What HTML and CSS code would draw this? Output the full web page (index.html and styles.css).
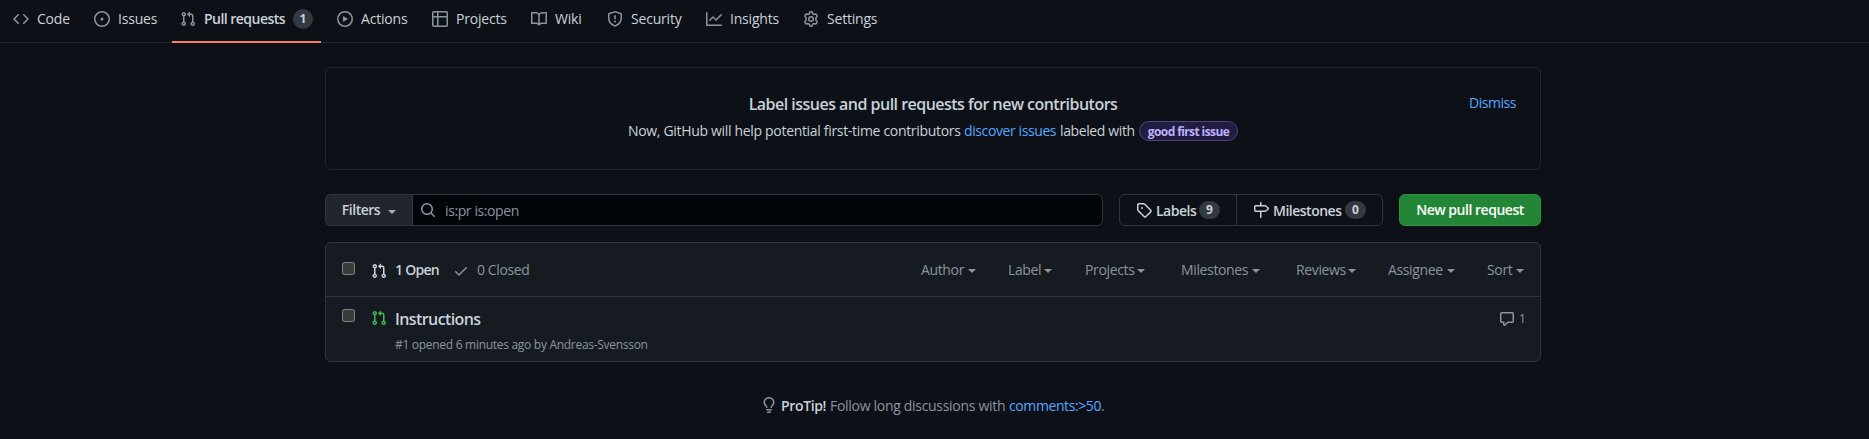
FILE: index.html
```
<!DOCTYPE html>
<html lang="en">
<head>
<meta charset="utf-8">
<title>Pull requests</title>
<link rel="stylesheet" href="styles.css">
</head>
<body>
<svg class="defs" width="0" height="0">
  <symbol id="pr" viewBox="0 0 16 16"><path fill-rule="evenodd" d="M7.177 3.073L9.573.677A.25.25 0 0110 .854v4.792a.25.25 0 01-.427.177L7.177 3.427a.25.25 0 010-.354zM3.75 2.5a.75.75 0 100 1.5.75.75 0 000-1.5zm-2.25.75a2.25 2.25 0 113 2.122v5.256a2.251 2.251 0 11-1.5 0V5.372A2.25 2.25 0 011.5 3.25zM11 2.5h-1V4h1a1 1 0 011 1v5.628a2.251 2.251 0 101.5 0V5A2.5 2.5 0 0011 2.5zm1 10.25a.75.75 0 111.5 0 .75.75 0 01-1.5 0zM3.75 12a.75.75 0 100 1.5.75.75 0 000-1.5z"/></symbol>
</svg>
<nav class="tabs">
  <a class="tab"><svg class="icon" viewBox="0 0 16 16"><path fill-rule="evenodd" d="M4.72 3.22a.75.75 0 011.06 1.06L2.06 8l3.72 3.72a.75.75 0 11-1.06 1.06L.47 8.53a.75.75 0 010-1.06l4.25-4.25zm6.56 0a.75.75 0 10-1.06 1.06L13.94 8l-3.72 3.72a.75.75 0 101.06 1.06l4.25-4.25a.75.75 0 000-1.06l-4.25-4.25z"/></svg><span class="t-code">Code</span></a>
  <a class="tab"><svg class="icon" viewBox="0 0 16 16"><path d="M8 9.5a1.5 1.5 0 100-3 1.5 1.5 0 000 3z"/><path fill-rule="evenodd" d="M8 0a8 8 0 100 16A8 8 0 008 0zM1.5 8a6.5 6.5 0 1113 0 6.5 6.5 0 01-13 0z"/></svg><span class="t-issues">Issues</span></a>
  <a class="tab selected"><svg class="icon"><use href="#pr"/></svg><span class="t-pulls">Pull requests</span><span class="counter round">1</span></a>
  <a class="tab"><svg class="icon" viewBox="0 0 16 16"><path fill-rule="evenodd" d="M1.5 8a6.5 6.5 0 1113 0 6.5 6.5 0 01-13 0zM8 0a8 8 0 100 16A8 8 0 008 0zM6.379 5.227A.25.25 0 006 5.442v5.117a.25.25 0 00.379.214l4.264-2.559a.25.25 0 000-.428L6.379 5.227z"/></svg><span class="t-actions">Actions</span></a>
  <a class="tab"><svg class="icon" viewBox="0 0 16 16"><path fill-rule="evenodd" d="M0 1.75C0 .784.784 0 1.75 0h12.5C15.216 0 16 .784 16 1.75v12.5A1.75 1.75 0 0114.25 16H1.75A1.75 1.75 0 010 14.25V1.75zM1.5 6.5v7.75c0 .138.112.25.25.25H5v-8H1.5zM5 5H1.5V1.75a.25.25 0 01.25-.25H5V5zm1.5 1.5v8h7.75a.25.25 0 00.25-.25V6.5h-8zm8-1.5h-8V1.5h7.75a.25.25 0 01.25.25V5z"/></svg><span class="t-projects">Projects</span></a>
  <a class="tab"><svg class="icon" viewBox="0 0 16 16"><path fill-rule="evenodd" d="M0 1.75A.75.75 0 01.75 1h4.253c1.227 0 2.317.59 3 1.501A3.744 3.744 0 0111.006 1h4.245a.75.75 0 01.75.75v10.5a.75.75 0 01-.75.75h-4.507a2.25 2.25 0 00-1.591.659l-.622.621a.75.75 0 01-1.06 0l-.622-.621A2.25 2.25 0 005.258 13H.75a.75.75 0 01-.75-.75V1.75zm8.755 3a2.25 2.25 0 012.25-2.25H14.5v9h-3.757c-.71 0-1.4.201-1.992.572l.004-7.322zm-1.504 7.324l.004-5.073-.002-2.253A2.25 2.25 0 005.003 2.5H1.5v9h3.757a3.75 3.75 0 011.994.574z"/></svg><span class="t-wiki">Wiki</span></a>
  <a class="tab"><svg class="icon" viewBox="0 0 16 16"><path fill-rule="evenodd" d="M7.467.133a1.75 1.75 0 011.066 0l5.25 1.68A1.75 1.75 0 0115 3.48V7c0 1.566-.32 3.182-1.303 4.682-.983 1.498-2.585 2.813-5.032 3.855a1.7 1.7 0 01-1.33 0c-2.447-1.042-4.049-2.357-5.032-3.855C1.32 10.182 1 8.566 1 7V3.48a1.75 1.75 0 011.217-1.667l5.25-1.68zm.61 1.429a.25.25 0 00-.153 0l-5.25 1.68a.25.25 0 00-.174.238V7c0 1.358.275 2.666 1.057 3.86.784 1.194 2.121 2.34 4.366 3.297a.2.2 0 00.154 0c2.245-.956 3.582-2.104 4.366-3.298C13.225 9.666 13.5 8.36 13.5 7V3.48a.25.25 0 00-.174-.237l-5.25-1.68zM9 10.5a1 1 0 11-2 0 1 1 0 012 0zm-.25-5.75a.75.75 0 10-1.5 0v3a.75.75 0 001.5 0v-3z"/></svg><span class="t-security">Security</span></a>
  <a class="tab"><svg class="icon" viewBox="0 0 16 16"><path fill-rule="evenodd" d="M1.5 1.75a.75.75 0 00-1.5 0v12.5c0 .414.336.75.75.75h14.5a.75.75 0 000-1.5H1.5V1.75zm14.28 2.53a.75.75 0 00-1.06-1.06L10 7.94 7.53 5.47a.75.75 0 00-1.06 0L3.22 8.72a.75.75 0 001.06 1.06L7 7.06l2.47 2.47a.75.75 0 001.06 0l5.25-5.25z"/></svg><span class="t-insights">Insights</span></a>
  <a class="tab"><svg class="icon" viewBox="0 0 16 16"><g fill="none" stroke="currentColor" stroke-width="1.5" stroke-linejoin="round"><path d="M6.7 1.3Q6.8.75 7.4.75H8.6Q9.2.75 9.3 1.3L9.6 2.8Q10.3 3.1 10.9 3.5L12.4 3Q12.9 2.8 13.2 3.3L14 4.7Q14.4 5.3 13.9 5.7L12.9 6.7Q13.1 8 12.9 9.3L13.9 10.3Q14.4 10.7 14 11.3L13.2 12.7Q12.9 13.2 12.4 13L10.9 12.5Q10.3 12.9 9.6 13.2L9.3 14.7Q9.2 15.25 8.6 15.25H7.4Q6.8 15.25 6.7 14.7L6.4 13.2Q5.7 12.9 5.1 12.5L3.6 13Q3.1 13.2 2.8 12.7L2 11.3Q1.6 10.7 2.1 10.3L3.1 9.3Q2.9 8 3.1 6.7L2.1 5.7Q1.6 5.3 2 4.7L2.8 3.3Q3.1 2.8 3.6 3L5.1 3.5Q5.7 3.1 6.4 2.8Z"/><circle cx="8" cy="8" r="2.25"/></g></svg><span class="t-settings">Settings</span></a>
</nav>
<main class="page">
  <section class="notice">
    <div class="notice-body">
      <h3>Label issues and pull requests for new contributors</h3>
      <p><span class="n1">Now, GitHub will help potential first-time contributors</span><a class="n2 link">discover issues</a><span class="n3">labeled with</span><span class="label">good first issue</span></p>
    </div>
    <a class="dismiss link">Dismiss</a>
  </section>
  <div class="toolbar">
    <div class="search">
      <button class="filters">Filters<i class="caret"></i></button>
      <div class="field"><svg class="icon" viewBox="0 0 16 16"><path fill-rule="evenodd" d="M11.5 7a4.499 4.499 0 11-8.998 0A4.499 4.499 0 0111.5 7zm-.82 4.74a6 6 0 111.06-1.06l3.04 3.04a.75.75 0 11-1.06 1.06l-3.04-3.04z"/></svg><span>is:pr is:open</span></div>
    </div>
    <div class="group">
      <a class="seg labels"><svg class="icon" viewBox="0 0 16 16"><path fill-rule="evenodd" d="M2.5 7.775V2.75a.25.25 0 01.25-.25h5.025a.25.25 0 01.177.073l6.25 6.25a.25.25 0 010 .354l-5.025 5.025a.25.25 0 01-.354 0l-6.25-6.25a.25.25 0 01-.073-.177zm-1.5 0V2.75C1 1.784 1.784 1 2.75 1h5.025c.464 0 .91.184 1.238.513l6.25 6.25a1.75 1.75 0 010 2.474l-5.026 5.026a1.75 1.75 0 01-2.474 0l-6.25-6.25A1.75 1.75 0 011 7.775zM6 5a1 1 0 100 2 1 1 0 000-2z"/></svg><span class="s-labels">Labels</span><span class="counter">9</span></a>
      <a class="seg"><svg class="icon" viewBox="0 0 16 16"><path fill-rule="evenodd" d="M7.75 0a.75.75 0 01.75.75V3h3.634c.414 0 .814.147 1.13.414l2.07 1.75a1.75 1.75 0 010 2.672l-2.07 1.75a1.75 1.75 0 01-1.13.414H8.5v5.25a.75.75 0 11-1.5 0V10H2.75A1.75 1.75 0 011 8.25v-3.5C1 3.784 1.784 3 2.75 3H7V.75A.75.75 0 017.75 0zm0 8.5h4.384a.25.25 0 00.161-.06l2.07-1.75a.25.25 0 000-.38l-2.07-1.75a.25.25 0 00-.161-.06H2.75a.25.25 0 00-.25.25v3.5c0 .138.112.25.25.25h5z"/></svg><span class="s-miles">Milestones</span><span class="counter">0</span></a>
    </div>
    <button class="primary">New pull request</button>
  </div>
  <section class="list">
    <header class="list-head">
      <i class="check"></i>
      <svg class="icon open-icon"><use href="#pr"/></svg><b class="open">1 Open</b>
      <svg class="icon tick" viewBox="0 0 16 16"><path fill-rule="evenodd" d="M13.78 4.22a.75.75 0 010 1.06l-7.25 7.25a.75.75 0 01-1.06 0L2.22 9.28a.75.75 0 011.06-1.06L6 10.94l6.72-6.72a.75.75 0 011.06 0z"/></svg><span>0 Closed</span>
      <div class="menus">
        <span class="m-author">Author<i class="caret"></i></span>
        <span class="m-label">Label<i class="caret"></i></span>
        <span class="m-projects">Projects<i class="caret"></i></span>
        <span class="m-miles">Milestones<i class="caret"></i></span>
        <span class="m-reviews">Reviews<i class="caret"></i></span>
        <span class="m-assignee">Assignee<i class="caret"></i></span>
        <span class="m-sort">Sort<i class="caret"></i></span>
      </div>
    </header>
    <article class="row">
      <i class="check"></i>
      <svg class="icon open-icon green"><use href="#pr"/></svg>
      <div class="info"><h4>Instructions</h4><p>#1 opened 6 minutes ago by Andreas-Svensson</p></div>
      <div class="comments"><svg class="icon" viewBox="0 0 16 16"><path fill-rule="evenodd" d="M2.75 2.5a.25.25 0 00-.25.25v7.5c0 .138.112.25.25.25h2a.75.75 0 01.75.75v2.19l2.72-2.72a.75.75 0 01.53-.22h4.5a.25.25 0 00.25-.25v-7.5a.25.25 0 00-.25-.25H2.75zM1 2.75C1 1.784 1.784 1 2.75 1h10.5c.966 0 1.75.784 1.75 1.75v7.5A1.75 1.75 0 0113.25 12H9.06l-2.573 2.573A1.457 1.457 0 014 13.543V12H2.75A1.75 1.75 0 011 10.25v-7.5z"/></svg><span>1</span></div>
    </article>
  </section>
  <p class="protip"><svg class="icon" viewBox="0 0 16 16"><path fill-rule="evenodd" d="M8 1.5c-2.363 0-4 1.69-4 3.75 0 .984.424 1.625.984 2.304l.214.253c.223.264.47.556.673.848.284.411.537.896.621 1.49a.75.75 0 01-1.484.211c-.04-.282-.163-.547-.37-.847a8.695 8.695 0 00-.542-.68c-.084-.1-.173-.205-.268-.32C3.201 7.75 2.5 6.766 2.5 5.25 2.5 2.31 4.863 0 8 0s5.5 2.31 5.5 5.25c0 1.516-.701 2.5-1.328 3.259-.095.115-.184.22-.268.319-.207.245-.383.453-.541.681-.208.3-.33.565-.37.847a.75.75 0 01-1.485-.212c.084-.593.337-1.078.621-1.489.203-.292.45-.584.673-.848.075-.088.147-.173.213-.253.561-.679.985-1.32.985-2.304 0-2.06-1.637-3.75-4-3.75zM6 15.25a.75.75 0 01.75-.75h2.5a.75.75 0 010 1.5h-2.5a.75.75 0 01-.75-.75zM5.75 12a.75.75 0 000 1.5h4.5a.75.75 0 000-1.5h-4.5z"/></svg><b>ProTip!</b><span class="tip">Follow long discussions with</span><span><a class="link">comments:&gt;50</a>.</span></p>
</main>
</body>
</html>
```
FILE: styles.css
```
* { box-sizing: border-box; margin: 0; padding: 0; }
body {
  height: 439px;
  overflow: hidden;
  background: #0d1117;
  color: #c9d1d9;
  font: 14px/21px "Open Sans", "Noto Sans", sans-serif;
  letter-spacing: -0.4px;
  white-space: nowrap;
}
.defs { position: absolute; }
.icon { width: 16px; height: 16px; flex: none; fill: currentColor; color: #8b949e; }
.link { color: #58a6ff; }
b, h3, h4, button { font-weight: 600; }
.caret {
  display: inline-block;
  margin-left: 4px;
  border: 4px solid transparent;
  border-top-color: currentColor;
  border-bottom: 0;
  vertical-align: 1px;
}

/* Tabs */
.tabs { display: flex; gap: 8px; height: 43px; padding-left: 5px; border-bottom: 1px solid #21262d; }
.tab { display: flex; align-items: center; gap: 8px; height: 43px; padding: 0 8px 5px; letter-spacing: -0.2px; }
.tab > span:not(.counter) { padding-bottom: 1px; }
.tab.selected { font-weight: 600; padding-bottom: 3px; border-bottom: 2px solid #f78166; }
.t-code { width: 33px; }
.t-issues { width: 38px; }
.t-pulls { width: 81px; letter-spacing: -0.53px; }
.t-actions { width: 47px; }
.t-projects { width: 51px; }
.t-wiki { width: 28px; }
.t-security { width: 51px; }
.t-insights { width: 49px; }
.t-settings { width: 51px; }
.counter {
  width: 21px;
  height: 18px;
  border-radius: 10px;
  background: #343941;
  font-size: 12px;
  font-weight: 700;
  letter-spacing: 0;
  line-height: 18px;
  text-align: center;
}
.counter.round { width: 20px; height: 20px; line-height: 20px; }

/* Page */
.page { width: 1216px; margin: 24px 0 0 325px; }
.notice {
  display: grid;
  grid-template-columns: 1fr;
  height: 103px;
  border: 1px solid #21262d;
  border-radius: 6px;
}
.notice > * { grid-area: 1 / 1; }
.notice-body { padding-top: 24px; }
.notice h3 { font-size: 16px; line-height: 24px; text-align: center; letter-spacing: -0.52px; }
.notice p { display: flex; align-items: center; padding: 4px 0 0 302px; }
.n1 { width: 336px; letter-spacing: -0.32px; }
.n2 { width: 96px; }
.n3 { width: 79px; letter-spacing: -0.38px; }
.label {
  width: 99px;
  height: 20px;
  border: 1px solid #4b4480;
  border-radius: 10px;
  background: #211d40;
  color: #beb0fb;
  font-size: 12px;
  font-weight: 700;
  letter-spacing: -0.6px;
  line-height: 19px;
  text-align: center;
}
.dismiss { justify-self: end; width: 47px; margin: 24px 24px 0 0; letter-spacing: -0.45px; }

/* Toolbar */
.toolbar { display: flex; gap: 16px; height: 32px; margin-top: 24px; }
.search { display: flex; width: 778px; }
button { font: 600 14px/20px "Open Sans", "Noto Sans", sans-serif; letter-spacing: -0.48px; }
.filters {
  width: 87px;
  border: 1px solid #30363d;
  border-right: 0;
  border-radius: 6px 0 0 6px;
  background: #21262d;
  color: #c9d1d9;
}
.filters .caret { margin-left: 8px; color: #a4abb3; }
.field {
  display: flex;
  flex: 1;
  align-items: center;
  gap: 9px;
  padding-left: 7px;
  border: 1px solid #30363d;
  border-radius: 0 6px 6px 0;
  background: #010409;
  color: #8b949e;
}
.group { display: flex; width: 264px; border: 1px solid #30363d; border-radius: 6px; }
.seg { display: flex; flex: 1; align-items: center; padding-left: 16px; font-weight: 600; letter-spacing: -0.5px; }
.seg.labels { flex: none; width: 117px; border-right: 1px solid #30363d; }
.seg .icon { color: #c9d1d9; margin-right: 4px; }
.s-labels { width: 43px; }
.s-miles { width: 72px; }
.primary { width: 142px; border: 1px solid #2f9042; border-radius: 6px; background: #238636; color: #fff; }

/* List */
.list { height: 120px; margin-top: 16px; border: 1px solid #30363d; border-radius: 6px; background: #161b22; }
.list-head { display: flex; align-items: center; height: 54px; padding: 0 16px; border-bottom: 1px solid #30363d; color: #8b949e; }
.check { flex: none; width: 13px; height: 13px; border: 1px solid #858585; border-radius: 2.5px; background: #3b3b3b; }
.list-head .check { margin-bottom: 3px; }
.open-icon { margin: 0 8px 0 16px; }
.list-head .open-icon { margin-top: 3px; color: #c9d1d9; }
.open { width: 46px; color: #c9d1d9; letter-spacing: -0.75px; }
.tick { margin: 3px 8px 0 12px; }
.menus { display: flex; margin-left: auto; letter-spacing: -0.36px; }
.menus > span { display: flex; align-items: center; justify-content: space-between; }
.menus .caret { margin: 3px 0 0; }
.m-author { width: 55px; margin-right: 32px; }
.m-label { width: 44px; margin-right: 33px; }
.m-projects { width: 60px; margin-right: 36px; }
.m-miles { width: 79px; margin-right: 36px; }
.m-reviews { width: 60px; margin-right: 32px; }
.m-assignee { width: 67px; margin-right: 32px; }
.m-sort { width: 37px; }
.row { display: flex; padding: 12px 16px 0; color: #8b949e; }
.row .open-icon { margin-top: 1px; }
.green { color: #3fb950; }
.info h4 { color: #c9d1d9; font-size: 16px; line-height: 21px; letter-spacing: -0.6px; }
.info p { margin-top: 6px; font-size: 12px; line-height: 18px; letter-spacing: -0.29px; }
.comments { display: flex; gap: 4px; width: 25px; height: 18px; margin: 1px 0 0 auto; font-size: 12px; line-height: 18px; }
.comments .icon { margin-top: 1px; }

.protip { display: flex; align-items: center; margin: 32.5px 0 0 436px; color: #8b949e; }
.protip .icon { margin-right: 4px; }
.protip b { width: 49px; color: #c9d1d9; letter-spacing: -0.35px; }
.tip { width: 179px; letter-spacing: -0.3px; }
```
